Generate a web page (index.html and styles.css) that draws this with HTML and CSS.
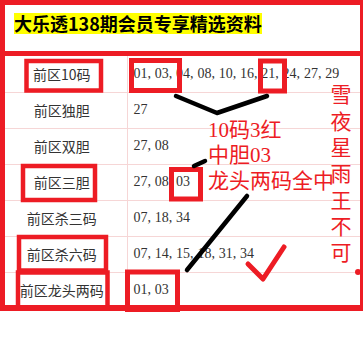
FILE: index.html
```html
<!DOCTYPE html>
<html lang="zh-CN">
<head>
  <meta charset="UTF-8" />
  <meta name="viewport" content="width=device-width, initial-scale=1.0"/>
  <title>大乐透138期会员专享精选资料</title>
  <link rel="stylesheet" href="styles.css">
</head>
<body>
  <div class="page">
    <div class="sheet">
      <div class="head">
        <h1 class="title">大乐透138期会员专享精选资料</h1>
      </div>

      <div class="table-wrap">
        <table class="picks">
          <tr><td class="label">前区10码</td><td class="nums">01, 03, 04, 08, 10, 16, 21, 24, 27, 29</td></tr>
          <tr><td class="label">前区独胆</td><td class="nums">27</td></tr>
          <tr><td class="label">前区双胆</td><td class="nums">27, 08</td></tr>
          <tr><td class="label">前区三胆</td><td class="nums">27, 08, 03</td></tr>
          <tr><td class="label">前区杀三码</td><td class="nums">07, 18, 34</td></tr>
          <tr><td class="label">前区杀六码</td><td class="nums">07, 14, 15, 18, 31, 34</td></tr>
          <tr><td class="label">前区龙头两码</td><td class="nums">01, 03</td></tr>
        </table>
      </div>
    </div>

    <!-- hand-drawn marks on top of the sheet -->
    <svg class="marks" width="364" height="340" viewBox="0 0 364 340">
      <g fill="none" stroke="#ed1c24" stroke-width="4.5">
        <rect x="26.5" y="61" width="74.5" height="29.5"/>
        <rect x="131.5" y="60.5" width="48" height="30" stroke-width="5"/>
        <rect x="260.5" y="61" width="24" height="30" stroke-width="5"/>
        <rect x="23" y="166" width="72" height="34"/>
        <rect x="171.5" y="169.5" width="29" height="29.5" stroke-width="5"/>
        <rect x="19" y="237" width="87" height="33.5"/>
        <rect x="18" y="272.5" width="89.5" height="36"/>
        <rect x="127.5" y="272" width="50" height="37.5" stroke-width="5"/>
        <polyline points="248,264 263,279 284,247" stroke-width="5" stroke-linecap="round" stroke-linejoin="round"/>
      </g>
      <circle cx="358" cy="272" r="3" fill="#ed1c24"/>
      <g fill="none" stroke="#000" stroke-width="4.5" stroke-linecap="round" stroke-linejoin="round">
        <polyline points="176,96 217,113 267,96"/>
        <line x1="194" y1="166" x2="205" y2="161"/>
        <line x1="247" y1="196" x2="187" y2="270"/>
      </g>
    </svg>

    <div class="note note-1">10码3红</div>
    <div class="note note-2">中胆03</div>
    <div class="note note-3">龙头两码全中</div>
    <div class="note note-side">雪夜星雨王不可</div>
  </div>
</body>
</html>
```

FILE: styles.css
```css
* {
  margin: 0;
  padding: 0;
  box-sizing: border-box;
}

body, html {
  width: 364px;
  height: 340px;
  overflow: hidden;
  background-color: #fff;
  font-family: "Noto Sans CJK SC", sans-serif;
}

.page {
  position: relative;
  width: 364px;
  height: 340px;
}

.sheet {
  width: 363px;
  border-style: solid;
  border-color: #ed1c24;
  border-width: 5px 3px 6px 5px;
}

.head {
  height: 51px;
  padding: 7px 0 0 9px;
  border-bottom: 5px solid #ed1c24;
}

.title {
  display: inline-block;
  font-size: 18px;
  line-height: 21px;
  font-weight: 700;
  color: #000;
  background-color: #ffff00;
}

.table-wrap {
  height: 249px;
  overflow: hidden;
}

.picks {
  width: 100%;
  border-collapse: collapse;
}

.picks td {
  height: 36px;
  border: 1px solid #f6d6d6;
  color: #333;
  white-space: nowrap;
}

.picks tr:first-child td {
  border-top: none;
}

.picks td:first-child {
  border-left: none;
}

.picks td:last-child {
  border-right: none;
}

.label {
  width: 122px;
  padding-right: 8px;
  text-align: center;
  font-size: 14px;
}

.nums {
  padding-left: 6px;
  font-family: "Liberation Serif", serif;
  font-size: 14px;
  word-spacing: 0.3px;
}

.marks {
  position: absolute;
  top: 0;
  left: 0;
  pointer-events: none;
}

.note {
  position: absolute;
  color: #ed1c24;
  font-family: "Liberation Serif", "Noto Sans CJK SC", serif;
  font-size: 21px;
  line-height: 21px;
  white-space: nowrap;
}

.note-1 { left: 208px; top: 120px; }
.note-2 { left: 208px; top: 145px; }
.note-3 { left: 208px; top: 171px; }

/* signature written down the right edge */
.note-side {
  left: 330px;
  top: 84px;
  font-family: "Noto Sans CJK SC", sans-serif;
  writing-mode: vertical-rl;
  text-orientation: upright;
  letter-spacing: 5.3px;
}
```
